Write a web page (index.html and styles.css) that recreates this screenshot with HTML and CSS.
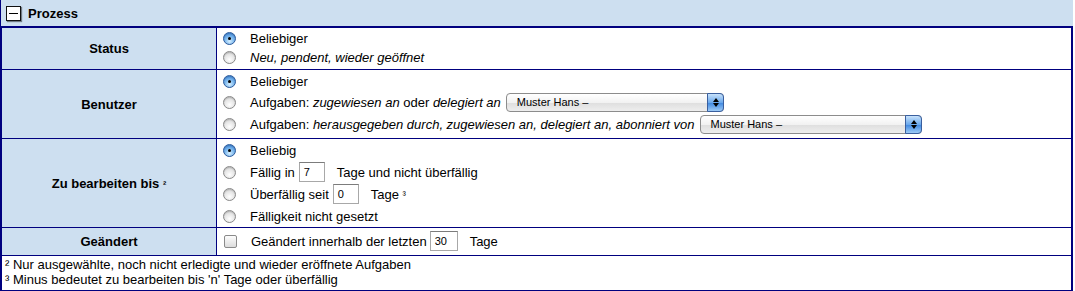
FILE: index.html
```html
<!DOCTYPE html>
<html lang="de">
<head>
<meta charset="UTF-8">
<title>Prozess</title>
<link rel="stylesheet" href="styles.css">
</head>
<body>
<div class="panel">
    <div class="panel-head"><span class="toggle"></span>Prozess</div>
    <table class="filter">
        <tr class="row-status">
            <th>Status</th>
            <td>
                <div class="opt"><span class="radio on"></span>Beliebiger</div>
                <div class="opt"><span class="radio"></span><em>Neu, pendent, wieder geöffnet</em></div>
            </td>
        </tr>
        <tr class="row-user">
            <th>Benutzer</th>
            <td>
                <div class="opt"><span class="radio on"></span>Beliebiger</div>
                <div class="opt tall"><span class="radio"></span>Aufgaben:&nbsp;<em>zugewiesen an</em>&nbsp;oder&nbsp;<em>delegiert an</em>
                    <span class="select sel-1">Muster Hans –<span class="arrows"></span></span>
                </div>
                <div class="opt tall"><span class="radio"></span>Aufgaben:&nbsp;<em>herausgegeben durch, zugewiesen an, delegiert an, abonniert von</em>
                    <span class="select sel-2">Muster Hans –<span class="arrows"></span></span>
                </div>
            </td>
        </tr>
        <tr class="row-due">
            <th>Zu bearbeiten bis <span class="mark">²</span></th>
            <td>
                <div class="opt tall"><span class="radio on"></span>Beliebig</div>
                <div class="opt tall"><span class="radio"></span>Fällig in <span class="field">7</span> Tage und nicht überfällig</div>
                <div class="opt tall"><span class="radio"></span>Überfällig seit <span class="field">0</span> Tage&nbsp;<span class="mark">³</span></div>
                <div class="opt tall"><span class="radio"></span>Fälligkeit nicht gesetzt</div>
            </td>
        </tr>
        <tr class="row-changed">
            <th>Geändert</th>
            <td>
                <div class="opt tall"><span class="check"></span>Geändert innerhalb der letzten <span class="field wide">30</span> Tage</div>
            </td>
        </tr>
        <tr>
            <td colspan="2" class="notes">
                ² Nur ausgewählte, noch nicht erledigte und wieder eröffnete Aufgaben<br>
                ³ Minus bedeutet zu bearbeiten bis 'n' Tage oder überfällig
            </td>
        </tr>
    </table>
</div>
</body>
</html>
```

FILE: styles.css
```css
body {
    margin: 0;
    font-family: "Liberation Sans", Arial, sans-serif;
    font-size: 13px;
    color: #000;
    background: #fff;
}

.panel {
    width: 1073px;
}

.panel-head {
    display: flex;
    align-items: center;
    height: 26px;
    padding-left: 5px;
    background-color: #cddff0;
    border-left: 1px solid #00007f;
    border-bottom: 1px solid #00007f;
    font-weight: bold;
}

.toggle {
    position: relative;
    width: 13px;
    height: 13px;
    margin-right: 7px;
    border: 1px solid #111;
    background: #fff;
    box-shadow: 1px 1px 1px rgba(0, 0, 0, 0.45);
}

.toggle::after {
    content: "";
    position: absolute;
    left: 2px;
    right: 2px;
    top: 6px;
    height: 1px;
    background: #000;
}

.filter {
    width: 100%;
    border-collapse: collapse;
    border: 2px solid #00007f;
    border-top: none;
}

.filter th,
.filter td {
    border: 1px solid #00007f;
    padding: 0;
}

.filter th {
    width: 214px;
    background-color: #cddff0;
    font-weight: bold;
    text-align: center;
    vertical-align: middle;
}

.filter td {
    padding: 0 6px;
}

.row-status td {
    padding: 1px 6px 2px 6px;
}

.row-user td {
    padding: 2px 6px 3px 6px;
}

.row-changed td {
    padding: 2px 6px 3px 6px;
}

.mark {
    font-size: 10px;
    font-weight: normal;
}

.filter th .mark {
    font-weight: bold;
}

.opt {
    display: flex;
    align-items: center;
    height: 19px;
    white-space: nowrap;
}

.opt.tall {
    height: 22px;
}

.radio {
    width: 13px;
    height: 13px;
    margin-right: 14px;
    border-radius: 50%;
    border: 1px solid #8a8a8a;
    box-sizing: border-box;
    background: radial-gradient(circle at 50% 70%, #ffffff 0%, #e4e4e4 55%, #c4c4c4 100%);
    box-shadow: inset 0 1px 1px rgba(0, 0, 0, 0.15);
    position: relative;
    flex-shrink: 0;
}

.radio.on {
    border-color: #2f5c9c;
    background: radial-gradient(circle at 50% 75%, #d8f0ff 0%, #7cb8ee 45%, #2f7bd4 100%);
}

.radio.on::after {
    content: "";
    position: absolute;
    left: 4px;
    top: 4px;
    width: 3px;
    height: 3px;
    border-radius: 50%;
    background: #000;
}

.check {
    width: 11px;
    height: 11px;
    margin: 0 14px 0 1px;
    border: 1px solid #8a8a8a;
    border-radius: 2px;
    background: linear-gradient(#fdfdfd, #dcdcdc);
    flex-shrink: 0;
}

.select {
    position: relative;
    display: inline-flex;
    align-items: center;
    box-sizing: border-box;
    height: 19px;
    margin-left: 5px;
    padding-left: 10px;
    border: 1px solid #8c8c8c;
    border-radius: 4px;
    background: linear-gradient(#ffffff, #f2f2f2 50%, #dedede 51%, #eeeeee);
    font-size: 11px;
    font-style: normal;
}

.sel-1 {
    width: 218px;
}

.sel-2 {
    width: 222px;
}

.arrows {
    position: absolute;
    right: -1px;
    top: -1px;
    bottom: -1px;
    width: 15px;
    border: 1px solid #3a5f9e;
    border-radius: 0 4px 4px 0;
    background: linear-gradient(#c8e2fb, #6aa8ec 50%, #3d86e0 51%, #9ccaf6);
}

.arrows::before,
.arrows::after {
    content: "";
    position: absolute;
    left: 5px;
    border-left: 3px solid transparent;
    border-right: 3px solid transparent;
}

.arrows::before {
    top: 4px;
    border-bottom: 4px solid #000;
}

.arrows::after {
    bottom: 4px;
    border-top: 4px solid #000;
}

.field {
    display: inline-block;
    box-sizing: border-box;
    width: 26px;
    height: 20px;
    margin: 0 12px 0 4px;
    padding: 3px 0 0 4px;
    border: 1px solid #a8a8a8;
    border-top-color: #7c7c7c;
    font-size: 11px;
    line-height: 13px;
}

.field.wide {
    width: 28px;
    margin-left: 3px;
}

.filter td.notes {
    padding: 1px 3px 3px 3px;
    line-height: 15px;
}
```
